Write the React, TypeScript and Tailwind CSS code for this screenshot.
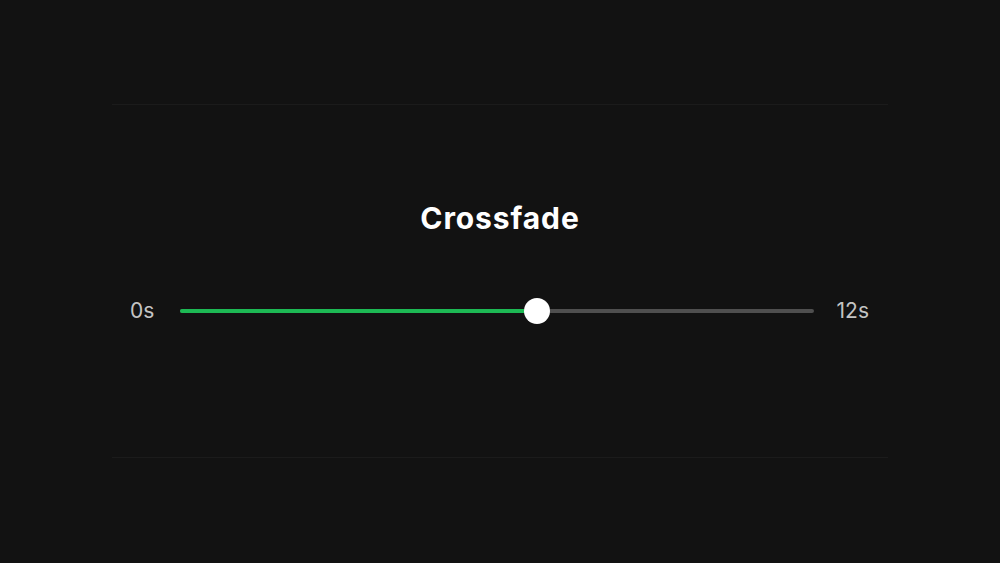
import React from "react";

const FONT = { fontFamily: "Inter, 'Noto Sans', 'Liberation Sans', sans-serif" };

function Slider({ percent }: { percent: number }) {
  return (
    <div className="relative flex h-[26px] flex-1 items-center">
      <div className="h-[4px] w-full rounded-full bg-[#4f4f4f]">
        <div className="h-full rounded-full bg-[#1db954]" style={{ width: `${percent}%` }} />
      </div>
      <div
        className="absolute top-0 h-[26px] w-[26px] -translate-x-1/2 rounded-full bg-white"
        style={{ left: `${percent}%` }}
      />
    </div>
  );
}

export default function App() {
  return (
    <div className="h-[563px] w-full bg-[#121212] pt-[104px]" style={FONT}>
      <div className="mx-auto flex h-[354px] w-[776px] flex-col items-center border-y border-[#1b1b1b] pt-[95px]">
        <h1 className="text-[30px] font-bold leading-[36px] tracking-[0.9px] text-white">Crossfade</h1>
        <div className="mt-[62px] flex w-full items-center pl-[18px] pr-[19px]">
          <span className="w-[26px] text-[21px] leading-[26px] text-[#c4c4c4]">0s</span>
          <div className="ml-[24px] mr-[23px] flex flex-1">
            <Slider percent={56.4} />
          </div>
          <span className="text-[21px] leading-[26px] text-[#c4c4c4]">12s</span>
        </div>
      </div>
    </div>
  );
}
